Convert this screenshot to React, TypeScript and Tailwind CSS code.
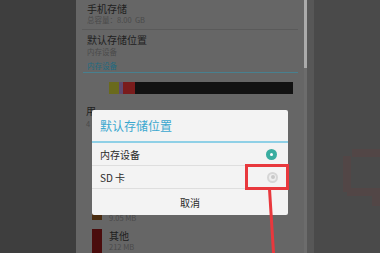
const font = { fontFamily: '"Noto Sans CJK SC", "Noto Sans", sans-serif' }

function Radio({ checked }: { checked: boolean }) {
  if (checked) {
    return (
      <span className="w-[11px] h-[11px] rounded-full bg-[#3aada0] flex items-center justify-center">
        <span className="w-[3px] h-[3px] rounded-full bg-white" />
      </span>
    )
  }
  return (
    <span className="w-[11px] h-[11px] rounded-full border-[2px] border-[#d6d6d6] bg-[#eeeeee] flex items-center justify-center">
      <span className="w-[4px] h-[4px] rounded-full bg-[#c8c8c8]" />
    </span>
  )
}

export default function App() {
  return (
    <div className="relative w-[380px] h-[253px] overflow-hidden flex bg-[#3f3f3f]" style={font}>
      {/* left margin */}
      <div className="w-[76px] h-full bg-[#3e3e3e]" />

      {/* storage settings panel (dimmed) */}
      <div className="w-[228px] h-full bg-[#666666] flex flex-col">
        <div className="pt-[2px] pl-[11px]">
          <div className="text-[10px] leading-[13px] text-[#1e1e1e]">手机存储</div>
          <div className="text-[7.5px] leading-[10px] text-[#4a4a4a]">总容量：8.00&nbsp;&nbsp;GB</div>
        </div>
        <div className="mt-[4px] ml-[6px] mr-[6px] h-px bg-[#5a5a5a]" />
        <div className="mt-[3px] pl-[11px]">
          <div className="text-[10px] leading-[13px] text-[#1e1e1e]">默认存储位置</div>
          <div className="mt-px text-[7.5px] leading-[10px] text-[#4a4a4a]">内存设备</div>
          <div className="mt-[4px] text-[7.5px] leading-[10px] text-[#1f6a80]">内存设备</div>
        </div>
        <div className="mt-px ml-[7px] mr-[6px] h-[2px] bg-[#48808f]" />
        <div className="mt-[9px] ml-[33px] w-[184px] h-[14px] flex">
          <div className="w-[10px] bg-[#6a6a1c]" />
          <div className="w-[4px] bg-[#5e4a6e]" />
          <div className="w-[12px] bg-[#7a1c1c]" />
          <div className="flex-1 bg-[#121212]" />
        </div>
        <div className="mt-[10px] pl-[10px]">
          <div className="text-[10px] leading-[13px] text-[#1e1e1e]">用</div>
          <div className="mt-[2px] text-[7.5px] leading-[10px] text-[#4a4a4a]">4</div>
        </div>
        <div className="mt-[81px] ml-[16px] flex gap-[7px]">
          <div className="w-[10px] h-[10px] bg-[#4a2c10]" />
          <div className="mt-[3px] text-[7.5px] leading-[10px] text-[#4a4a4a]">9.05 MB</div>
        </div>
        <div className="mt-[6px] ml-[16px] flex gap-[7px]">
          <div className="w-[10px] h-[24px] bg-[#4a0c0c]" />
          <div>
            <div className="text-[10px] leading-[13px] text-[#1e1e1e]">其他</div>
            <div className="text-[7.5px] leading-[10px] text-[#4a4a4a]">212 MB</div>
          </div>
        </div>
      </div>

      {/* scrollbar */}
      <div className="w-[3px] h-full bg-[#6c6c6c] flex flex-col">
        <div className="h-[68px] bg-[#ababab]" />
      </div>
      <div className="w-[7px] h-full bg-[#575757]" />

      {/* right side */}
      <div className="flex-1 h-full bg-[#4a4a4a]" />

      {/* faint shape on the right */}
      <svg className="absolute left-[336px] top-[146px]" width="44" height="60" viewBox="0 0 44 60">
        <path d="M16 7 H44 M11 10 V46 M11 46 H40 V60" stroke="#524646" strokeWidth="8" fill="none" />
      </svg>

      {/* dialog */}
      <div className="absolute left-[92px] top-[110px] w-[196px] h-[105px] bg-[#f3f3f3] rounded-[2px] flex flex-col">
        <div className="h-[31px] flex items-center pl-[8px] text-[12px] text-[#3aa7cf]">默认存储位置</div>
        <div className="h-[2px] bg-[#8fd0e6]" />
        <div className="h-[23px] flex items-center justify-between pl-[8px] pr-[11px] border-b border-[#dedede] text-[10px] text-[#2a2a2a]">
          <span>内存设备</span>
          <Radio checked />
        </div>
        <div className="h-[23px] flex items-center justify-between pl-[8px] pr-[10px] border-b border-[#dedede] text-[10px] text-[#2a2a2a]">
          <span>SD 卡</span>
          <Radio checked={false} />
        </div>
        <div className="flex-1 flex items-center justify-center text-[10px] text-[#2a2a2a]">取消</div>
      </div>

      {/* red highlight + arrow */}
      <div className="absolute left-[245px] top-[164px] w-[44px] h-[26px] border-[3px] border-[#e8383d]" />
      <svg className="absolute left-0 top-0" width="380" height="253" viewBox="0 0 380 253">
        <path d="M269.5 189 L273.5 253" stroke="#e8383d" strokeWidth="3" fill="none" />
      </svg>
    </div>
  )
}
